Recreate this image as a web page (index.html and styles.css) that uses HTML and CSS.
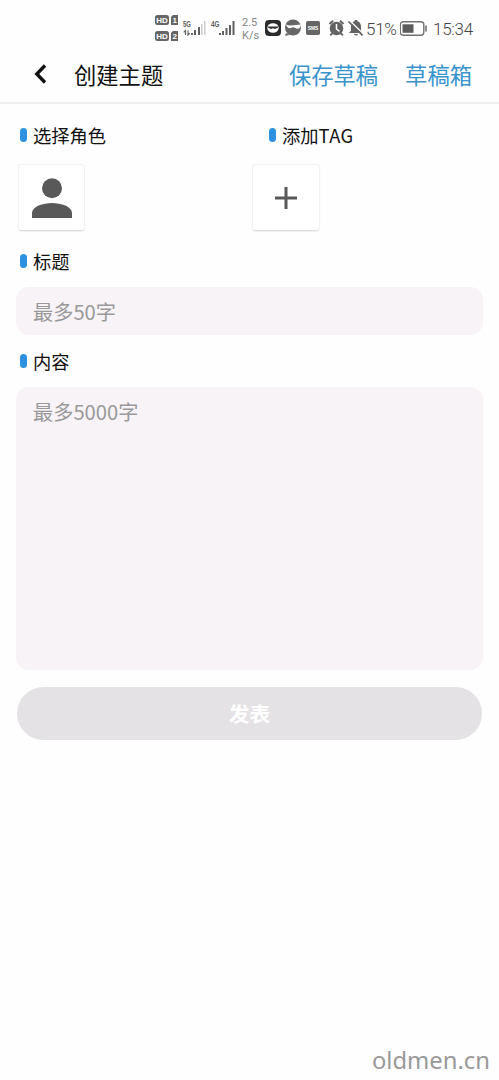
FILE: index.html
```html
<!DOCTYPE html>
<html lang="zh-CN">
<head>
<meta charset="utf-8">
<meta name="viewport" content="width=device-width, initial-scale=1">
<title>创建主题</title>
<link rel="stylesheet" href="styles.css">
</head>
<body>
<div class="screen">
  <div class="status">
    <svg class="network" width="84" height="30" viewBox="155 13 84 30">
      <g fill="#666">
        <rect x="155" y="15" width="14" height="10" rx="2.5"/>
        <path d="M173 15h5v10h-7v-8z"/>
        <rect x="155" y="31" width="14" height="10" rx="2.5"/>
        <path d="M173 31h5v10h-7v-8z"/>
      </g>
      <g class="badge-text">
        <text x="156.3" y="23.2">HD</text><text x="172.4" y="23.2">1</text>
        <text x="156.3" y="39.2">HD</text><text x="172.4" y="39.2">2</text>
      </g>
      <g class="gen-text"><text x="183" y="27" textLength="8" lengthAdjust="spacingAndGlyphs">5G</text><text x="211" y="27" textLength="8.5" lengthAdjust="spacingAndGlyphs">4G</text></g>
      <path d="M185.500 35v-4.500l-1.800 1.800M188 30.500v4.500l1.800-1.800" fill="none" stroke="#666" stroke-width="1.200"/>
      <path d="M191 33h2v2h-2zM194 30h2v5h-2zM198 27h2v8h-2zM219 33h2v2h-2zM222 31h2v4h-2zM225.500 28h2v7h-2zM229 25h2v10h-2zM232.500 21h2v14h-2z" fill="#606060"/>
      <path d="M201 24h1.500v11H201zM204 21h1.500v14H204z" fill="#ccc"/>
    </svg>
    <div class="speed"><span>2.5</span><span>K/s</span></div>
    <svg class="notices" width="100" height="20" viewBox="264 18 100 20">
      <rect x="265" y="20" width="16" height="16" rx="4" fill="#2b2b2b"/>
      <ellipse cx="273" cy="28" rx="5.700" ry="4.800" fill="#fff"/>
      <path d="M267.500 26.500h11l-1 1.600-2.700 1-1.800-.8-1.800.8-2.700-1z" fill="#333"/>
      <circle cx="293" cy="27.500" r="8" fill="#666"/>
      <path d="M286 24.500l3 1 4.500-.2 7.500-.8-1 3.300q-3 2-5 0l-2-.6-2 .8q-3 .8-4-1.500z" fill="#fff"/>
      <path d="M286 33l-1 2.800 5-.9z" fill="#666"/>
      <rect x="306" y="21" width="14" height="14" rx="1.800" fill="#666"/>
      <text class="sms-text" x="307.700" y="29.500" textLength="10.600" lengthAdjust="spacingAndGlyphs">SMS</text>
      <path d="M329.500 24l3.500-3.200M340 20.800l3.500 3.200M332 33.500l-1.800 1.800M341 33.500l1.800 1.800" stroke="#626262" stroke-width="2"/>
      <circle cx="336.500" cy="28.500" r="6.800" fill="#626262"/>
      <path d="M336.500 24v5l3 2.400" fill="none" stroke="#fff" stroke-width="1.500"/>
      <path d="M349 33l2-2.500v-4c0-3 1.500-4.800 3.700-5.300v-1.200h2.600v1.200c2.200.5 3.700 2.300 3.700 5.300v4l2 2.500zM353.800 34h4.400q-2.200 3-4.400 0" fill="#626262"/>
      <path d="M349.500 20.500l14 13.500" stroke="#fefefe" stroke-width="1.500"/>
      <path d="M348.500 21.500l14 13.800" stroke="#626262" stroke-width="1.700"/>
    </svg>
    <span class="percent">51%</span>
    <svg class="battery" width="28" height="16" viewBox="0 0 28 16">
      <rect x=".3" y=".8" width="23.500" height="13.500" rx="3" fill="none" stroke="#707070" stroke-width="1.400"/>
      <rect x="2.500" y="3.300" width="11" height="8.500" fill="#5c5c5c"/>
      <path d="M26 4.500v6" stroke="#707070" stroke-width="1.600"/>
    </svg>
    <span class="clock">15:34</span>
  </div>
  <header class="bar">
    <svg class="back" width="14" height="20" viewBox="0 0 14 20"><path d="M12 1.500L3.800 10l8.200 8.500" fill="none" stroke="#111" stroke-width="3.400"/></svg>
    <h1 class="title">创建主题</h1>
    <a class="link">保存草稿</a>
    <a class="link link-last">草稿箱</a>
  </header>
  <main class="form">
    <div class="pickers">
      <section>
        <h2 class="label">选择角色</h2>
        <div class="tile">
          <svg width="40" height="40" viewBox="0 0 40 40" fill="#595959"><circle cx="20" cy="10.200" r="10"/><path d="M0 40v-5c0-6.500 11-10 20-10s20 3.500 20 10v5z"/></svg>
        </div>
      </section>
      <section class="tag-section">
        <h2 class="label label-tag"><span>添加<span class="latin">TAG</span></span></h2>
        <div class="tile">
          <svg width="22" height="22" viewBox="0 0 22 22"><path d="M11 0v22M0 11h22" stroke="#595959" stroke-width="3"/></svg>
        </div>
      </section>
    </div>
    <h2 class="label">标题</h2>
    <div class="field field-title">最多50字</div>
    <h2 class="label label-content">内容</h2>
    <div class="field field-content">最多5000字</div>
    <button class="submit">发表</button>
  </main>
  <footer class="site">oldmen.cn</footer>
</div>
</body>
</html>
```
FILE: styles.css
```css
* { box-sizing: border-box; }
body { margin: 0; background: #fefefe; font-family: "Noto Sans CJK SC", sans-serif; }
.screen { width: 499px; height: 1080px; display: flex; flex-direction: column; overflow: hidden; }
svg { display: block; flex: none; }

.status { height: 50px; padding-left: 155px; display: flex; align-items: flex-start; color: #666; font-family: Roboto, sans-serif; flex: none; }
.network { margin-top: 13px; }
.badge-text { font: 700 8px "Liberation Sans", sans-serif; fill: #fff; }
.gen-text { font: 700 8.5px "Liberation Sans", sans-serif; fill: #606060; }
.sms-text { font: 700 5px "Liberation Sans", sans-serif; fill: #fff; }
.speed { width: 25px; margin-top: 16px; padding-left: 3px; display: flex; flex-direction: column; font-size: 11px; line-height: 13px; color: #858585; }
.notices { margin-top: 18px; }
.percent { width: 36px; margin-top: 19px; padding-left: 2px; font-size: 17px; line-height: 20px; letter-spacing: -.3px; font-weight: 300; color: #444; }
.battery { margin-top: 21px; }
.clock { margin: 19px 0 0 5px; font-size: 17px; line-height: 20px; letter-spacing: -.3px; font-weight: 300; color: #444; }

.bar { height: 54px; padding: 0 27px 4px 33px; display: flex; align-items: center; border-bottom: 2px solid #f1f0f1; flex: none; }
.title { margin: 0 auto 0 27px; font-size: 22.300px; line-height: 32px; font-weight: 400; color: #111; }
.link { font-size: 22.300px; line-height: 32px; color: #3994cc; }
.link-last { margin-left: 27px; }

.form { padding: 17px 16px 0; display: flex; flex-direction: column; }
.pickers { display: grid; grid-template-columns: 234px 1fr; margin-bottom: 17px; }
.label { margin: 0; padding-left: 4px; display: flex; align-items: center; gap: 6px; height: 28px; font-size: 18.300px; line-height: 28px; font-weight: 400; color: #111; }
.label::before { content: ""; width: 7px; height: 14px; border-radius: 4px; background: #2c91df; }
.label-tag { padding-left: 19px; }
.latin { letter-spacing: .5px; }
.tile { width: 65px; height: 65px; margin: 16px 0 0 3px; display: flex; align-items: center; justify-content: center; background: #fff; border-radius: 2px; box-shadow: 0 .5px 2px rgba(0, 0, 0, .18); }
.tag-section .tile { margin-left: 3px; width: 66px; }
.field { padding: 0 17px; border-radius: 13px; background: #f7f3f7; color: #999; font-size: 20.200px; line-height: 49px; }
.field-title { height: 48px; margin-top: 12px; }
.label-content { margin-top: 12px; }
.field-content { height: 283px; margin-top: 12px; }
.submit { height: 53px; margin: 17px 1px 0; padding: 0; border: 0; border-radius: 27px; background: #e4e2e5; color: #fff; font: 700 20.800px/53px "Noto Sans CJK SC", sans-serif; }

.site { margin: auto 9px 3px auto; font: 400 23.800px/33px "Noto Sans", sans-serif; color: #999; }
```
